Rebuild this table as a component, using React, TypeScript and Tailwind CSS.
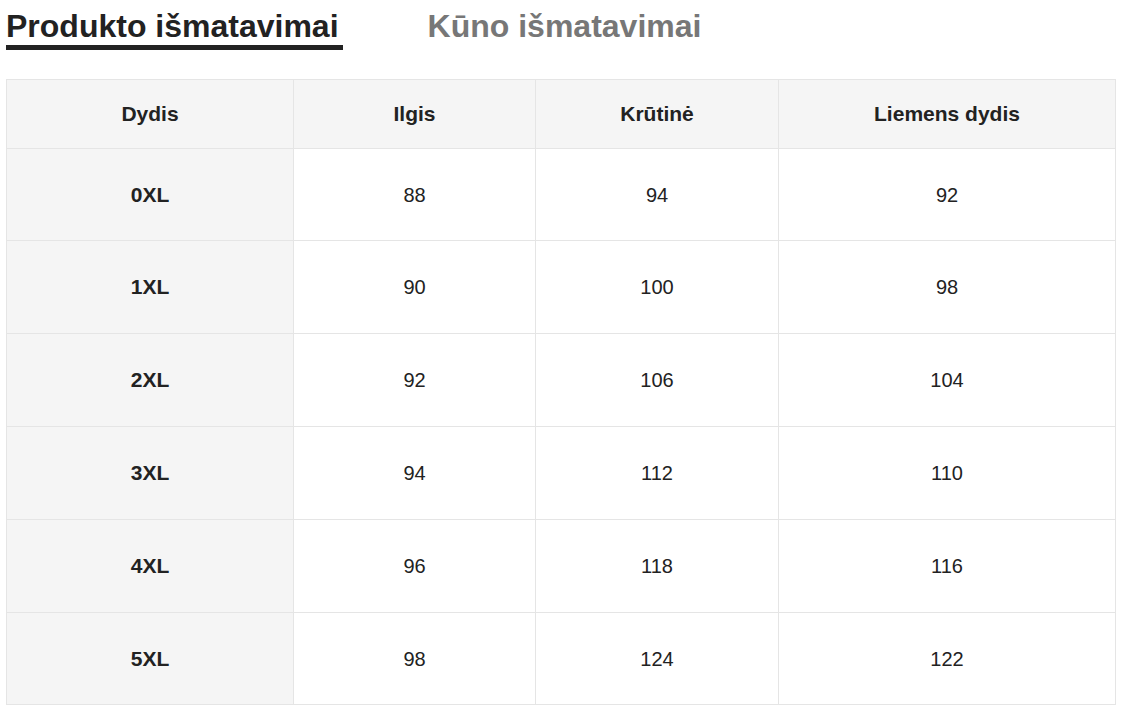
import React from "react";

const rows = [
  ["0XL", "88", "94", "92"],
  ["1XL", "90", "100", "98"],
  ["2XL", "92", "106", "104"],
  ["3XL", "94", "112", "110"],
  ["4XL", "96", "118", "116"],
  ["5XL", "98", "124", "122"],
];
const heights = ["h-[92px]", "h-[93px]", "h-[93px]", "h-[93px]", "h-[93px]", "h-[92px]"];

export default function App() {
  return (
    <div className="w-[1124px] h-[714px] bg-white pl-[6px] text-[#222]" style={{ fontFamily: '"Liberation Sans", Arial, sans-serif' }}>
      <div className="flex gap-[85px] pt-[8px]">
        <div className="text-[32px] font-bold leading-[36px] text-[#222] border-b-[5px] border-[#222] pb-[1px] pr-[4px]">Produkto išmatavimai</div>
        <div className="text-[32px] font-bold leading-[36px] text-[#777]">Kūno išmatavimai</div>
      </div>
      <div className="mt-[29px] w-[1110px] border-l border-t border-[#e5e5e5]">
        <div className="grid grid-cols-[287px_242px_243px_337px] h-[69px] bg-[#f5f5f5] text-[21px] font-bold">
          {["Dydis", "Ilgis", "Krūtinė", "Liemens dydis"].map((h) => (
            <div key={h} className="flex items-center justify-center border-r border-b border-[#e5e5e5]">{h}</div>
          ))}
        </div>
        {rows.map((r, i) => (
          <div key={r[0]} className={`grid grid-cols-[287px_242px_243px_337px] ${heights[i]}`}>
            {r.map((c, j) => (
              <div
                key={j}
                className={
                  j === 0
                    ? "flex items-center justify-center border-r border-b border-[#e5e5e5] bg-[#f5f5f5] text-[21px] font-bold"
                    : "flex items-center justify-center border-r border-b border-[#e5e5e5] bg-white text-[20px]"
                }
              >
                {c}
              </div>
            ))}
          </div>
        ))}
      </div>
    </div>
  );
}
